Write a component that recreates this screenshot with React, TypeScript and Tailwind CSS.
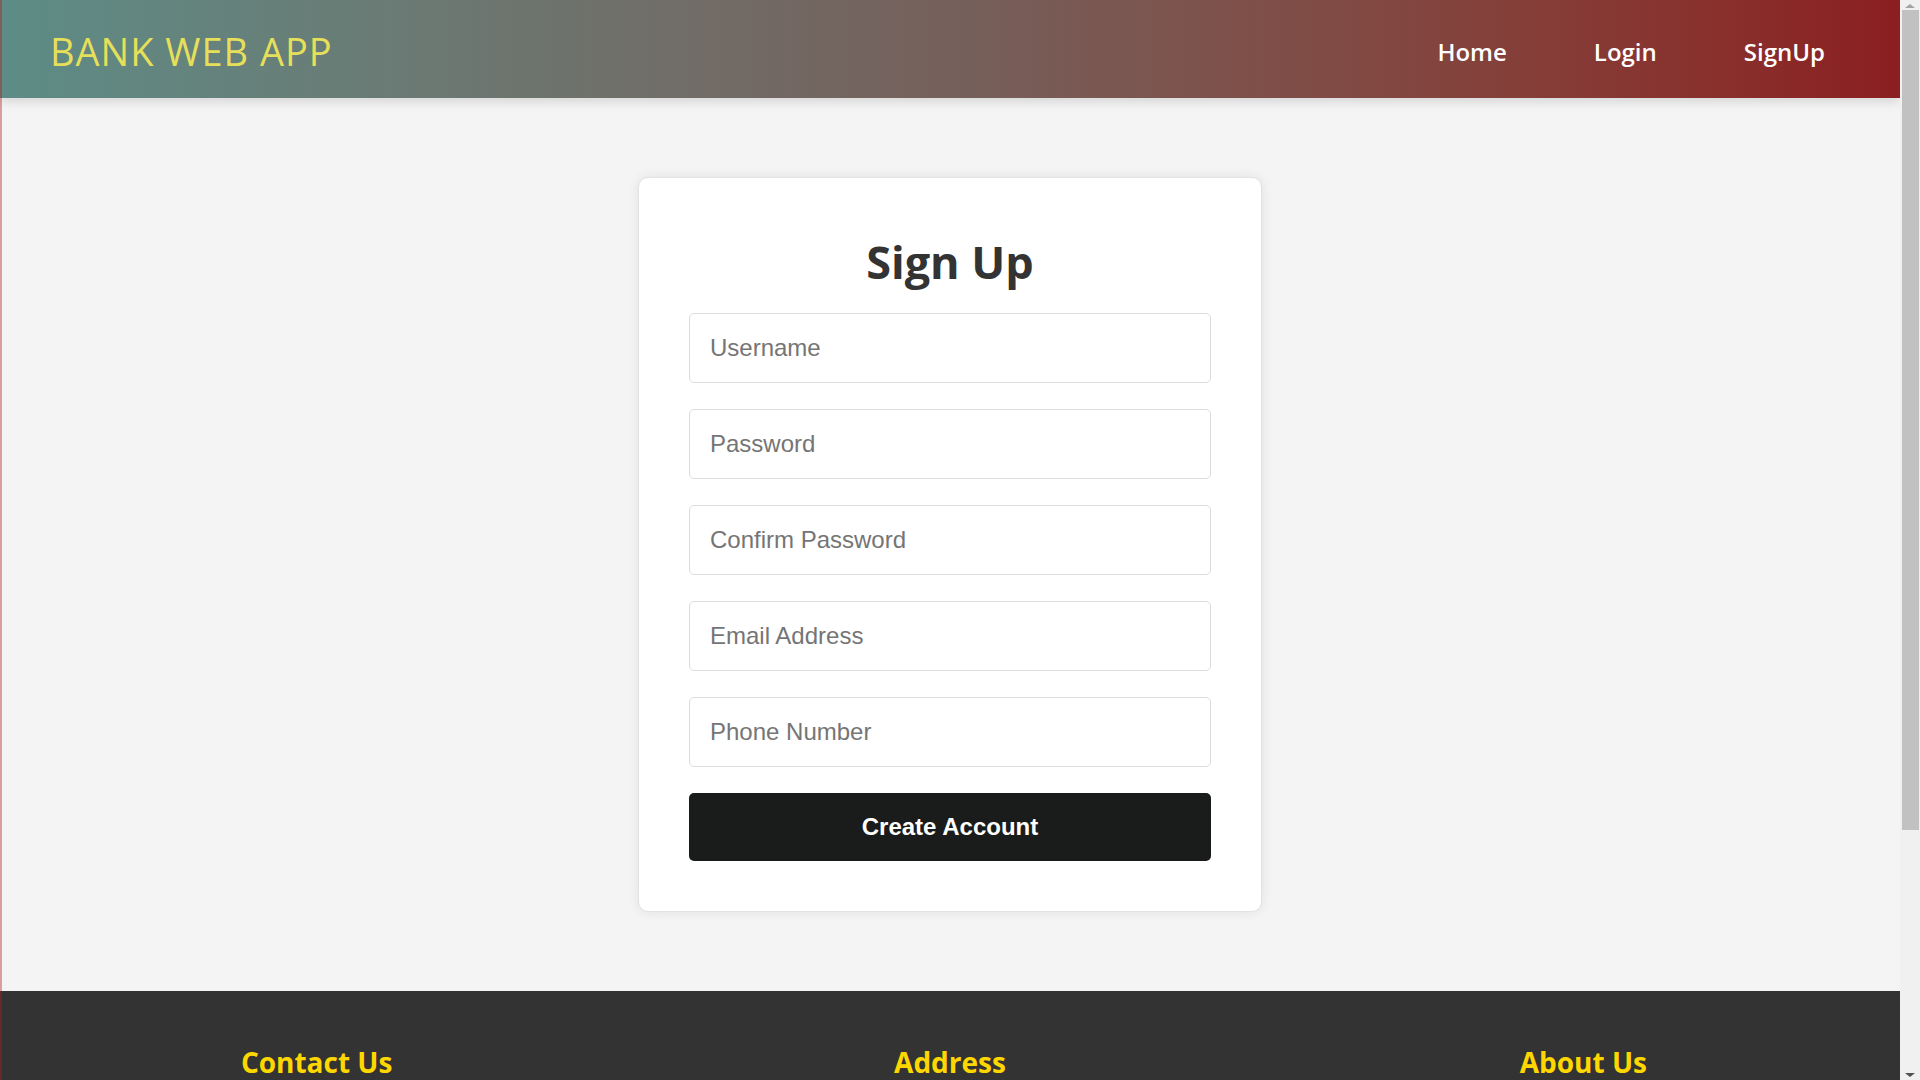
import React from "react";

const FIELDS = [
  { id: "username", type: "text", placeholder: "Username" },
  { id: "password", type: "password", placeholder: "Password" },
  { id: "confirm", type: "password", placeholder: "Confirm Password" },
  { id: "email", type: "email", placeholder: "Email Address" },
  { id: "phone", type: "tel", placeholder: "Phone Number" },
];

const NAV = ["Home", "Login", "SignUp"];

function Header() {
  return (
    <header className="relative z-10 flex h-[98px] items-center justify-between bg-gradient-to-r from-[#5d8c86] via-[#75605b] to-[#8b1e20] pl-[50px] pr-[75px] pt-[5px] shadow-[0_4px_10px_rgba(0,0,0,0.12)]">
      <h1 className="font-['Open_Sans',sans-serif] text-[38px] font-normal tracking-[1px] text-[#e6df5a]">
        BANK WEB APP
      </h1>
      <nav className="flex items-center gap-[87px]">
        {NAV.map((item) => (
          <a
            key={item}
            href="#"
            className="font-['Open_Sans',sans-serif] text-[24px] font-semibold text-white"
          >
            {item}
          </a>
        ))}
      </nav>
    </header>
  );
}

function SignUpCard() {
  return (
    <div className="w-[624px] rounded-[10px] border border-[#e2e2e2] bg-white p-[50px] shadow-[0_0_12px_rgba(0,0,0,0.08)]">
      <h2 className="mb-[17px] text-center font-['Open_Sans',sans-serif] text-[45px] font-bold text-[#333]">
        Sign Up
      </h2>
      <form className="flex flex-col gap-[26px]" onSubmit={(e) => e.preventDefault()}>
        {FIELDS.map((f) => (
          <input
            key={f.id}
            type={f.type}
            placeholder={f.placeholder}
            className="h-[70px] w-full rounded-[5px] border border-[#dcdcdc] bg-white px-[20px] font-['Liberation_Sans',Arial,sans-serif] text-[24px] text-[#333] outline-none placeholder:text-[#757575]"
          />
        ))}
        <button
          type="submit"
          className="h-[68px] w-full rounded-[5px] bg-[#1a1c1b] font-['Liberation_Sans',Arial,sans-serif] text-[24px] font-bold text-white"
        >
          Create Account
        </button>
      </form>
    </div>
  );
}

function Footer() {
  return (
    <footer className="grid min-h-[410px] grid-cols-3 bg-[#333] pt-[50px]">
      {["Contact Us", "Address", "About Us"].map((title) => (
        <div key={title} className="text-center">
          <h3 className="font-['Open_Sans',sans-serif] text-[28px] font-bold text-[#ffd700]">
            {title}
          </h3>
        </div>
      ))}
    </footer>
  );
}

// browser window scrollbar as seen in the screenshot
function Scrollbar() {
  return (
    <div className="fixed right-0 top-0 z-30 flex h-screen w-[20px] flex-col items-center bg-[#f0f0f0]">
      <div className="flex h-[8px] items-end">
        <div className="h-0 w-0 border-x-[5px] border-b-[4px] border-x-transparent border-b-[#a3a3a3]" />
      </div>
      <div className="mt-[2px] h-[820px] w-[17px] bg-[#c1c1c1]" />
      <div className="flex-1" />
      <div className="mb-[3px] h-0 w-0 border-x-[5px] border-t-[4px] border-x-transparent border-t-[#505050]" />
    </div>
  );
}

export default function App() {
  return (
    <div className="min-h-screen bg-[#f4f4f4]">
      <div className="pointer-events-none fixed left-0 top-0 z-20 h-full w-[2px] bg-[#b01e1e]/40" />
      <div className="mr-[20px]">
        <Header />
        <main className="flex justify-center py-[79px]">
          <SignUpCard />
        </main>
        <Footer />
      </div>
      <Scrollbar />
    </div>
  );
}
